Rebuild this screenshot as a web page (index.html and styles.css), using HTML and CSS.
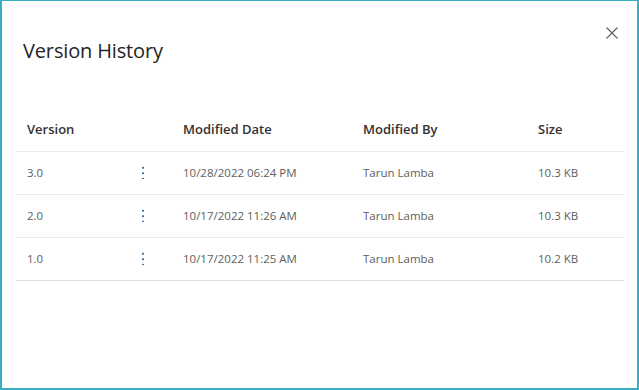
FILE: index.html
```html
<!DOCTYPE html>
<html lang="en">
<head>
    <meta charset="UTF-8">
    <title>Version History</title>
    <link rel="stylesheet" href="styles.css">
</head>
<body>
    <div class="dialog">
        <div class="header">
            <h1>Version History</h1>
            <button class="close" aria-label="Close">
                <svg width="12" height="12" viewBox="0 0 12 12">
                    <path d="M0.5 0.5 L11.5 11.5 M11.5 0.5 L0.5 11.5" stroke="#605e5c" stroke-width="1.1" fill="none"/>
                </svg>
            </button>
        </div>
        <table class="versions">
            <thead>
                <tr>
                    <th class="col-version">Version</th>
                    <th class="col-menu"></th>
                    <th class="col-date">Modified Date</th>
                    <th class="col-by">Modified By</th>
                    <th class="col-size">Size</th>
                </tr>
            </thead>
            <tbody>
                <tr>
                    <td>3.0</td>
                    <td class="menu"><span class="dots"></span></td>
                    <td>10/28/2022 06:24 PM</td>
                    <td>Tarun Lamba</td>
                    <td>10.3 KB</td>
                </tr>
                <tr>
                    <td>2.0</td>
                    <td class="menu"><span class="dots"></span></td>
                    <td>10/17/2022 11:26 AM</td>
                    <td>Tarun Lamba</td>
                    <td>10.3 KB</td>
                </tr>
                <tr>
                    <td>1.0</td>
                    <td class="menu"><span class="dots"></span></td>
                    <td>10/17/2022 11:25 AM</td>
                    <td>Tarun Lamba</td>
                    <td>10.2 KB</td>
                </tr>
            </tbody>
        </table>
    </div>
</body>
</html>
```

FILE: styles.css
```css
html, body {
    margin: 0;
    padding: 0;
    height: 100%;
}
body {
    font-family: "Open Sans", "Noto Sans", sans-serif;
    background-color: #fff;
    color: #323130;
}
.dialog {
    box-sizing: border-box;
    height: 390px;
    width: 639px;
    border-top: 1px solid #3aaebe;
    border-left: 2px solid #3aaebe;
    border-right: 2px solid #3aaebe;
    border-bottom: 2px solid #3aaebe;
    padding: 0 13px 0 14px;
}
.header {
    display: flex;
    justify-content: space-between;
    align-items: flex-start;
    box-sizing: border-box;
    height: 106px;
    padding: 24px 0 0 7px;
}
.header h1 {
    margin: 12px 0 0 0;
    font-size: 20px;
    font-weight: 400;
    color: #252423;
    letter-spacing: -0.15px;
}
.close {
    border: none;
    background: none;
    padding: 0;
    margin: 2px 6px 0 0;
    width: 12px;
    height: 12px;
    line-height: 0;
}
.versions {
    width: 608px;
    table-layout: fixed;
    border-collapse: collapse;
    font-size: 11.5px;
}
.versions th {
    text-align: left;
    font-size: 13px;
    font-weight: 600;
    color: #323130;
    height: 44px;
    padding: 0 0 0 11px;
    border-bottom: 1px solid #edebe9;
}
.versions td {
    height: 40px;
    padding: 0 0 2px 11px;
    color: #605e5c;
    border-bottom: 1px solid #edebe9;
}
.versions tbody tr:last-child td {
    border-bottom: 1px solid #e1dfdd;
}
.col-version { width: 105px; }
.col-menu { width: 29px; }
.col-date { width: 169px; }
.col-by { width: 164px; }
.versions td.menu {
    padding-left: 10px;
}
.dots {
    display: block;
    width: 2px;
    height: 14px;
    background: radial-gradient(circle, #3e6fa6 0.9px, transparent 1.1px) 0 0 / 2px 5.5px repeat-y;
}
```
